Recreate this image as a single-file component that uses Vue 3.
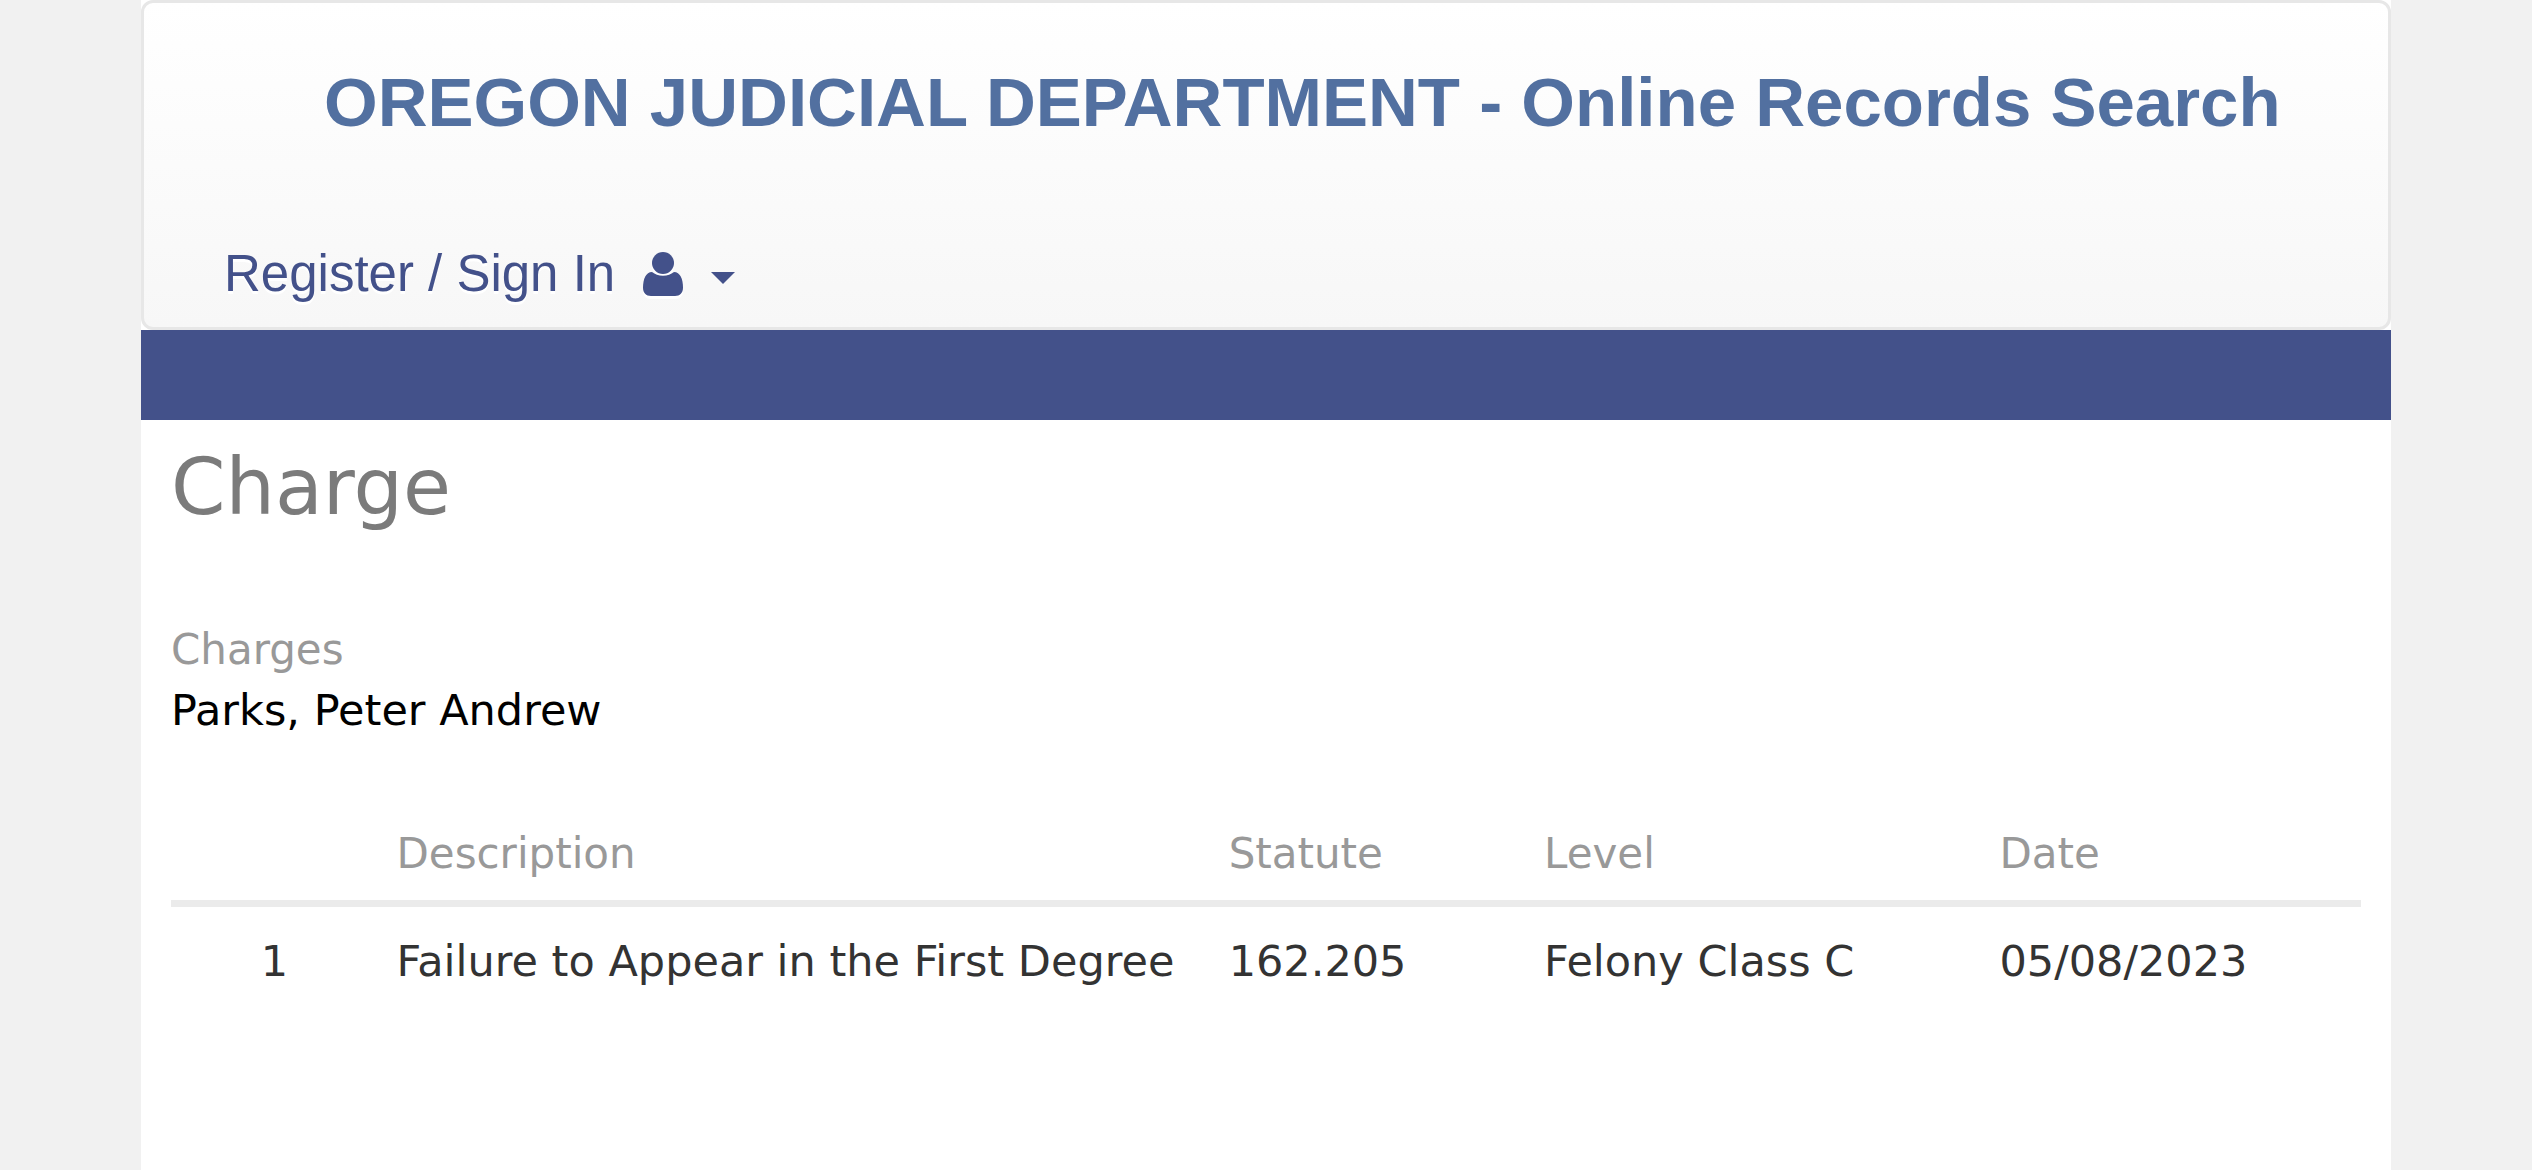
<script setup>
const columns = [
  { key: 'description', label: 'Description' },
  { key: 'statute', label: 'Statute' },
  { key: 'level', label: 'Level' },
  { key: 'date', label: 'Date' },
]

const charges = [
  {
    number: 1,
    description: 'Failure to Appear in the First Degree',
    statute: '162.205',
    level: 'Felony Class C',
    date: '05/08/2023',
  },
]
</script>

<template>
  <div class="page">
    <header class="masthead">
      <h1 class="site-title">OREGON JUDICIAL DEPARTMENT - Online Records Search</h1>
      <nav class="account">
        <a class="sign-in" href="#">
          <span>Register / Sign In</span>
          <svg class="user-icon" viewBox="0 0 40 44" aria-hidden="true">
            <circle cx="20" cy="11" r="11" />
            <path d="M9 20C3 20 0 27 0 35.500C0 41 3 44 8 44H32C37 44 40 41 40 35.500C40 27 37 20 31 20C28 22.300 24.500 23.700 20 23.700C15.500 23.700 12 22.300 9 20Z" />
          </svg>
          <span class="caret"></span>
        </a>
      </nav>
    </header>
    <div class="band"></div>
    <main class="content">
      <h2 class="section-title">Charge</h2>
      <section>
        <h3 class="label">Charges</h3>
        <p class="party">Parks, Peter Andrew</p>
        <table class="charges">
          <colgroup>
            <col class="col-spacer" />
            <col class="col-number" />
            <col class="col-description" />
            <col class="col-statute" />
            <col class="col-level" />
            <col class="col-date" />
          </colgroup>
          <thead>
            <tr>
              <th></th>
              <th></th>
              <th v-for="column in columns" :key="column.key" scope="col">{{ column.label }}</th>
            </tr>
          </thead>
          <tbody>
            <tr v-for="charge in charges" :key="charge.number">
              <td></td>
              <td>{{ charge.number }}</td>
              <td v-for="column in columns" :key="column.key">{{ charge[column.key] }}</td>
            </tr>
          </tbody>
        </table>
      </section>
    </main>
  </div>
</template>

<style>
body {
  margin: 0;
  background: #f1f1f1;
}
</style>

<style scoped>
.page {
  box-sizing: border-box;
  min-height: 100vh;
  margin: 0 141px;
  background: #fff;
  font-family: Verdana, "DejaVu Sans", sans-serif;
  font-size: 43px;
  line-height: 60px;
}

h1,
h2,
h3,
p {
  margin: 0;
  font-weight: normal;
}

.masthead {
  border: 3px solid #e7e7e7;
  border-radius: 12px;
  background: linear-gradient(#fff, #f7f7f7);
  font-family: "Helvetica Neue", "Liberation Sans", Arial, sans-serif;
}

.site-title {
  padding: 60px 0 0 180px;
  color: #5270a0;
  font-size: 69px;
  font-weight: bold;
  line-height: 80px;
  white-space: nowrap;
}

.account {
  display: flex;
  padding: 101px 80px 23px;
}

.sign-in {
  display: flex;
  align-items: center;
  color: #43518a;
  font-size: 51px;
  line-height: 60px;
  text-decoration: none;
  text-shadow: 0 3px 0 #fff;
}

.user-icon {
  width: 40px;
  height: 44px;
  margin: 0 28px;
  fill: currentColor;
  filter: drop-shadow(0 3px 0 #fff);
}

.caret {
  margin-top: 8px;
  border: 12px solid transparent;
  border-top-color: currentColor;
  border-bottom: 0;
}

.band {
  height: 90px;
  background: #43518a;
}

.content {
  padding: 22px 30px;
}

.section-title {
  margin-bottom: 88px;
  color: #7b7b7b;
  font-size: 78px;
  line-height: 90px;
}

.label {
  color: #999;
  font-size: 42px;
}

.party {
  color: #000;
}

.charges {
  width: 100%;
  margin-top: 60px;
  border-collapse: collapse;
  table-layout: fixed;
  color: #333;
}

.col-spacer {
  width: 3%;
}

.col-number {
  width: 6.2%;
}

.col-description {
  width: 38%;
}

.col-statute {
  width: 14.4%;
}

.col-level {
  width: 20.8%;
}

.charges th,
.charges td {
  padding: 24px 0 24px 24px;
  font-weight: normal;
  text-align: left;
  white-space: nowrap;
}

.charges th {
  padding-bottom: 16px;
  border-bottom: 7px solid #ebebeb;
  color: #999;
  font-size: 42px;
}
</style>
